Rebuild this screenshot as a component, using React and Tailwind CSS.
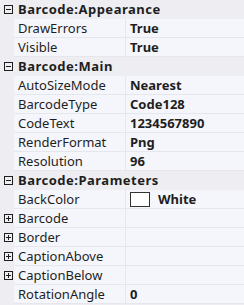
import React from "react";

const groups = [
  {
    title: "Barcode:Appearance",
    rows: [
      { name: "DrawErrors", value: "True" },
      { name: "Visible", value: "True" },
    ],
  },
  {
    title: "Barcode:Main",
    rows: [
      { name: "AutoSizeMode", value: "Nearest" },
      { name: "BarcodeType", value: "Code128" },
      { name: "CodeText", value: "1234567890" },
      { name: "RenderFormat", value: "Png" },
      { name: "Resolution", value: "96" },
    ],
  },
  {
    title: "Barcode:Parameters",
    rows: [
      { name: "BackColor", value: "White", swatch: true },
      { name: "Barcode", expand: true },
      { name: "Border", expand: true },
      { name: "CaptionAbove", expand: true },
      { name: "CaptionBelow", expand: true },
      { name: "RotationAngle", value: "0" },
    ],
  },
];

// little boxed +/- glyph used by the property grid
const ToggleBox = ({ open }) => (
  <svg width="9" height="9" viewBox="0 0 9 9" className="block">
    <rect x="0.5" y="0.5" width="8" height="8" fill="none" stroke="#1e1e1e" />
    <line x1="2" y1="4.5" x2="7" y2="4.5" stroke="#1e1e1e" />
    {!open && <line x1="4.5" y1="2" x2="4.5" y2="7" stroke="#1e1e1e" />}
  </svg>
);

const App = () => {
  return (
    <div
      className="w-[244px] h-[305px] overflow-hidden bg-[#eeeef2] text-[13px] leading-none text-[#1e1e1e]"
      style={{ fontFamily: '"Noto Sans", "Open Sans", sans-serif' }}
    >
      {groups.map((group) => (
        <div key={group.title}>
          <div className="flex items-center h-[19px]">
            <div className="w-[14px] flex justify-center pl-[2px] shrink-0">
              <ToggleBox open />
            </div>
            <span className="pl-[4px] font-bold tracking-[0.5px] whitespace-nowrap">{group.title}</span>
          </div>
          {group.rows.map((row) => (
            <div key={row.name} className="flex h-[19px]">
              <div className="w-[14px] flex items-center justify-center pl-[2px] shrink-0">
                {row.expand && <ToggleBox />}
              </div>
              <div className="flex flex-1 bg-[#f5f6fb] border-b border-[#e6e7ed]">
                <div className="w-[112px] shrink-0 flex items-center pl-[4px] border-r border-[#e6e7ed] whitespace-nowrap">
                  {row.name}
                </div>
                <div className="flex-1 flex items-center pl-[4px] font-bold whitespace-nowrap">
                  {row.swatch && (
                    <span className="w-[20px] h-[15px] bg-white border border-[#333] mr-[8px] shrink-0" />
                  )}
                  {row.value}
                </div>
              </div>
            </div>
          ))}
        </div>
      ))}
    </div>
  );
};

export default App;
